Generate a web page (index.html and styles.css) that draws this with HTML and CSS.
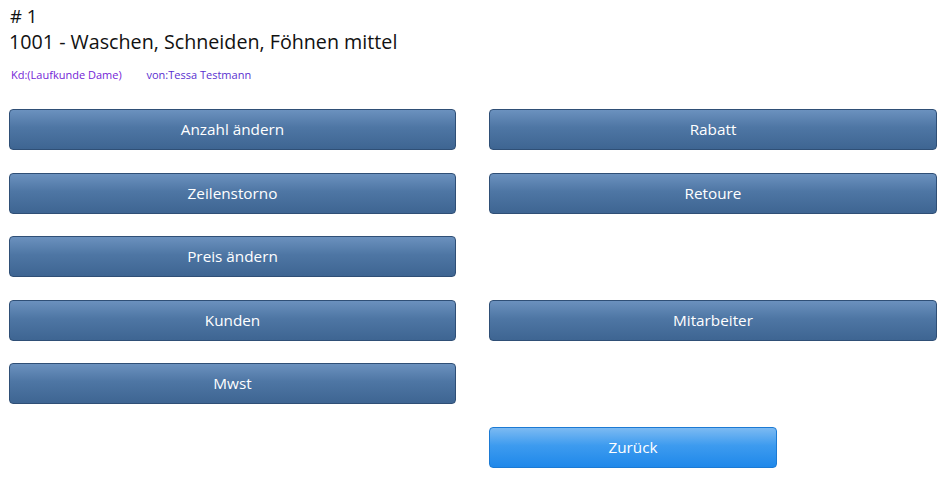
FILE: index.html
```html
<!DOCTYPE html>
<html>
<head>
    <title>Position 1</title>
    <link rel="stylesheet" href="styles.css">
</head>
<body>
    <div class="header">
        <div class="pos">#&nbsp;1</div>
        <div class="article">1001 - Waschen, Schneiden, Föhnen mittel</div>
        <div class="info">
            <span class="customer">Kd:(Laufkunde Dame)</span>
            <span class="staff">von:Tessa Testmann</span>
        </div>
    </div>

    <div class="actions">
        <button class="action">Anzahl ändern</button>
        <button class="action">Rabatt</button>
        <button class="action">Zeilenstorno</button>
        <button class="action">Retoure</button>
        <button class="action">Preis ändern</button>
        <div class="empty"></div>
        <button class="action">Kunden</button>
        <button class="action">Mitarbeiter</button>
        <button class="action">Mwst</button>
        <div class="empty"></div>
        <div class="empty"></div>
        <div class="back-cell">
            <button class="back">Zurück</button>
        </div>
    </div>
</body>
</html>
```

FILE: styles.css
```css
body {
    margin: 0;
    padding: 0 6px 0 9px;
    font-family: "Open Sans", "DejaVu Sans", sans-serif;
    color: #111;
    background: #fff;
}
.header {
    padding-top: 3px;
}
.pos {
    font-size: 18.5px;
    line-height: 26px;
    padding-left: 1px;
}
.article {
    font-size: 19.7px;
    line-height: 26px;
}
.info {
    font-size: 11px;
    line-height: 14px;
    margin-top: 13px;
    padding-left: 2px;
}
.customer {
    color: #7424d6;
}
.staff {
    color: #5a30d0;
    margin-left: 22px;
}
.actions {
    display: grid;
    grid-template-columns: 447px 448px;
    column-gap: 33px;
    row-gap: 22.6px;
    margin-top: 27px;
}
button {
    font-family: "Open Sans", "DejaVu Sans", sans-serif;
    font-size: 15.3px;
    color: #fff;
    cursor: pointer;
    margin: 0;
    padding-bottom: 2px;
}
.action {
    height: 41px;
    border: 1px solid #2f4f76;
    border-radius: 4px;
    background: linear-gradient(to bottom, #6b91be 0%, #4e76a4 45%, #3e6592 100%);
}
.action:hover {
    background: #3e6592;
}
.empty {
    height: 41px;
}
.back {
    width: 288px;
    height: 41px;
    border: 1px solid #1b7ad4;
    border-radius: 4px;
    background: linear-gradient(to bottom, #7cbaf2 0%, #3d9bef 45%, #1f88ea 100%);
}
```
